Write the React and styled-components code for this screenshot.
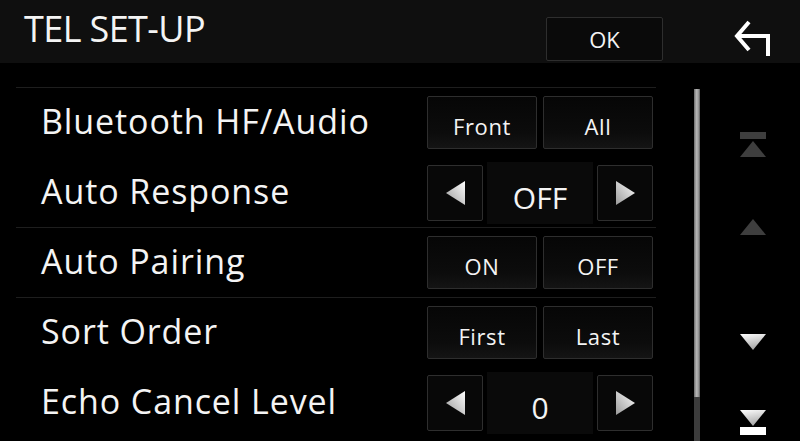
import React from "react";
import styled, { createGlobalStyle } from "styled-components";

const GlobalStyle = createGlobalStyle`
	html, body {
		margin: 0;
		padding: 0;
		background: #000;
	}
	body {
		font-family: "Open Sans", "Noto Sans", sans-serif;
		color: #f4f4f4;
	}
`;

const Screen = styled.div`
	width: 800px;
	height: 441px;
	overflow: hidden;
	background: #000;
	display: flex;
	flex-direction: column;
`;

const Header = styled.div`
	height: 63px;
	flex-shrink: 0;
	background: #0f0f0f;
	display: flex;
	align-items: flex-start;
	padding-left: 24px;
	box-sizing: border-box;
`;

const Title = styled.h1`
	margin: 0;
	font-size: 36px;
	font-weight: 400;
	letter-spacing: -0.6px;
	line-height: 1;
	padding-top: 11px;
	flex: 1;
`;

const OkButton = styled.button`
	width: 117px;
	height: 44px;
	margin-top: 17px;
	border: 1px solid #2e2e2e;
	border-radius: 2px;
	background: #0a0a0a;
	color: #f4f4f4;
	font-family: inherit;
	font-size: 22px;
	padding: 0;
	cursor: pointer;
`;

const BackButton = styled.button`
	width: 38px;
	height: 40px;
	margin: 18px 28px 0 71px;
	padding: 0;
	border: none;
	background: none;
	cursor: pointer;
`;

const Body = styled.div`
	flex: 1;
	display: flex;
`;

const List = styled.div`
	width: 640px;
	margin: 24px 0 0 16px;
	border-top: 1px solid #1e1e1e;
`;

const Row = styled.div`
	height: 70px;
	box-sizing: border-box;
	display: flex;
	align-items: center;
	padding: 0 3px 0 25px;
	border-bottom: 1px solid ${p => (p.$divider ? "#1e1e1e" : "transparent")};
`;

const Label = styled.span`
	flex: 1;
	font-size: 34px;
	letter-spacing: 0.9px;
	padding-bottom: 3px;
`;

const Pair = styled.div`
	display: flex;
	gap: 6px;
`;

const Choice = styled.button`
	width: 110px;
	height: 53px;
	border: 1px solid #2e2e2e;
	border-radius: 2px;
	background: linear-gradient(#060606, #0c0c0c 70%, #141414);
	color: #f4f4f4;
	font-family: inherit;
	font-size: 22px;
	letter-spacing: 0.6px;
	padding: 6px 0 0;
	cursor: pointer;
`;

const Stepper = styled.div`
	width: 226px;
	display: flex;
	align-items: center;
`;

const StepButton = styled.button`
	width: 56px;
	height: 56px;
	border: 1px solid #2e2e2e;
	border-radius: 2px;
	background: #080808;
	display: flex;
	align-items: center;
	justify-content: center;
	padding: 0;
	cursor: pointer;
`;

const Value = styled.div`
	flex: 1;
	height: 62px;
	margin: 0 4px;
	background: #0a0a0a;
	display: flex;
	align-items: center;
	justify-content: center;
	font-size: 30px;
	padding-top: 10px;
	box-sizing: border-box;
`;

const Track = styled.div`
	width: 6px;
	margin: 26px 0 0 38px;
	background: #3c3c3c;
	display: flex;
	flex-direction: column;
`;

const Thumb = styled.div`
	height: 308px;
	background: linear-gradient(90deg, #6a6a6a, #b4b4b4 40%, #a0a0a0 70%, #5a5a5a);
`;

const SideNav = styled.div`
	flex: 1;
	display: flex;
	flex-direction: column;
	align-items: center;
	padding-left: 6px;
`;

const NavIcon = styled.button`
	margin-top: ${p => p.$top}px;
	border: none;
	background: none;
	padding: 0;
	line-height: 0;
	cursor: pointer;
`;

const Triangle = ({ dir }) => {
	const id = "tri-" + dir;
	const pts = dir === "left" ? "19,0 19,24 0,12" : "0,0 0,24 19,12";
	return (
		<svg width="19" height="24" viewBox="0 0 19 24">
			<defs>
				<linearGradient id={id} x1="1" y1="0" x2="0" y2="1">
					<stop offset="0" stopColor="#ffffff" />
					<stop offset="1" stopColor="#9a9a9a" />
				</linearGradient>
			</defs>
			<polygon points={pts} fill={`url(#${id})`} />
		</svg>
	);
};

const BackIcon = () => (
	<svg width="38" height="40" viewBox="0 0 38 40">
		<polyline points="15,4 3,18 15,32" fill="none" stroke="#fff" strokeWidth="4" />
		<polyline points="3,18 34,18 34,38" fill="none" stroke="#fff" strokeWidth="4" />
	</svg>
);

// scroll buttons on the right edge, dim when disabled
const NavArrow = ({ kind, dim }) => {
	const fill = dim ? "#3e3e3e" : "url(#navgrad)";
	const bar = kind === "top" || kind === "bottom";
	const h = bar ? 25 : 16;
	return (
		<svg width="26" height={h} viewBox={`0 0 26 ${h}`}>
			<defs>
				<linearGradient id="navgrad" x1="0" y1="0" x2="0.3" y2="1">
					<stop offset="0" stopColor="#ffffff" />
					<stop offset="1" stopColor="#a8a8a8" />
				</linearGradient>
			</defs>
			{kind === "top" && <rect x="0" y="0" width="26" height="7" fill={fill} />}
			{kind === "top" && <polygon points="13,9 26,25 0,25" fill={fill} />}
			{kind === "up" && <polygon points="13,0 26,16 0,16" fill={fill} />}
			{kind === "down" && <polygon points="0,0 26,0 13,16" fill={fill} />}
			{kind === "bottom" && <polygon points="0,0 26,0 13,16" fill={fill} />}
			{kind === "bottom" && <rect x="0" y="17" width="26" height="8" fill="#fff" />}
		</svg>
	);
};

const settings = [
	{ label: "Bluetooth HF/Audio", type: "pair", options: ["Front", "All"] },
	{ label: "Auto Response", type: "step", value: "OFF", divider: true },
	{ label: "Auto Pairing", type: "pair", options: ["ON", "OFF"], divider: true },
	{ label: "Sort Order", type: "pair", options: ["First", "Last"] },
	{ label: "Echo Cancel Level", type: "step", value: "0" },
];

const App = () => {
	return (
		<>
			<GlobalStyle />
			<Screen>
				<Header>
					<Title>TEL SET-UP</Title>
					<OkButton>OK</OkButton>
					<BackButton aria-label='Back'>
						<BackIcon />
					</BackButton>
				</Header>
				<Body>
					<List>
						{settings.map(s => (
							<Row key={s.label} $divider={s.divider}>
								<Label>{s.label}</Label>
								{s.type === "pair" ? (
									<Pair>
										{s.options.map(o => (
											<Choice key={o}>{o}</Choice>
										))}
									</Pair>
								) : (
									<Stepper>
										<StepButton aria-label='Previous'>
											<Triangle dir='left' />
										</StepButton>
										<Value>{s.value}</Value>
										<StepButton aria-label='Next'>
											<Triangle dir='right' />
										</StepButton>
									</Stepper>
								)}
							</Row>
						))}
					</List>
					<Track>
						<Thumb />
					</Track>
					<SideNav>
						<NavIcon $top={69} aria-label='Top'>
							<NavArrow kind='top' dim />
						</NavIcon>
						<NavIcon $top={62} aria-label='Up'>
							<NavArrow kind='up' dim />
						</NavIcon>
						<NavIcon $top={99} aria-label='Down'>
							<NavArrow kind='down' />
						</NavIcon>
						<NavIcon $top={60} aria-label='Bottom'>
							<NavArrow kind='bottom' />
						</NavIcon>
					</SideNav>
				</Body>
			</Screen>
		</>
	);
};

export default App;
